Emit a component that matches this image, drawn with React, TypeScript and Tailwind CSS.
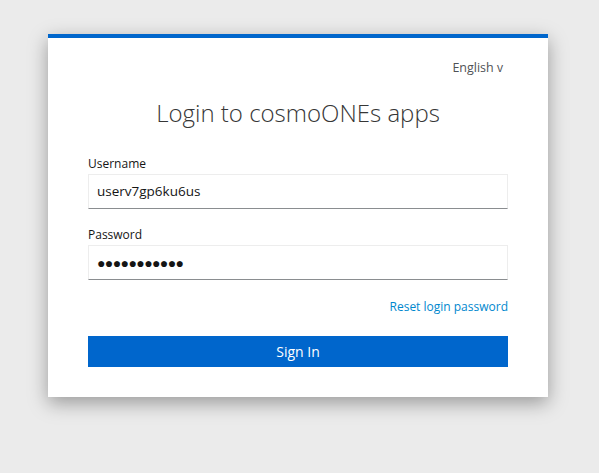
import React from "react";

export default function App() {
  return (
    <div
      className="w-[599px] h-[473px] bg-[#ebebeb] pt-[34px] pl-[48px]"
      style={{ fontFamily: '"Open Sans", "Noto Sans", sans-serif' }}
    >
      <div className="w-[500px] bg-white border-t-4 border-[#0066cc] shadow-[0_6px_18px_rgba(0,0,0,0.35)] px-[40px] pt-[20px] pb-[30px]">
        <div className="flex justify-end pr-[5px]">
          <span className="text-[12.5px] leading-[20px] text-[#4f5255]">
            English <span className="text-[12px]">v</span>
          </span>
        </div>
        <h1 className="mt-[17px] text-center text-[24px] leading-[36px] font-light text-[#363636]">
          Login to cosmoONEs apps
        </h1>
        <div className="mt-[23px]">
          <div className="text-[12px] leading-[20px] text-[#151515]">Username</div>
          <div className="h-[35px] border border-[#ededed] border-b-[#8a8d90] flex items-center pl-[8px] text-[13.5px] text-[#151515]">
            userv7gp6ku6us
          </div>
        </div>
        <div className="mt-[16px]">
          <div className="text-[12px] leading-[20px] text-[#151515]">Password</div>
          <div className="h-[35px] border border-[#ededed] border-b-[#8a8d90] flex items-center pl-[8px] text-[14px] text-[#151515] tracking-[-0.6px]">
            ●●●●●●●●●●●
          </div>
        </div>
        <div className="mt-[17px] flex justify-end">
          <span className="text-[12px] leading-[20px] text-[#0088ce]">Reset login password</span>
        </div>
        <div className="mt-[19px] h-[31px] bg-[#0066cc] flex items-center justify-center text-white text-[14px]">
          Sign In
        </div>
      </div>
    </div>
  );
}
